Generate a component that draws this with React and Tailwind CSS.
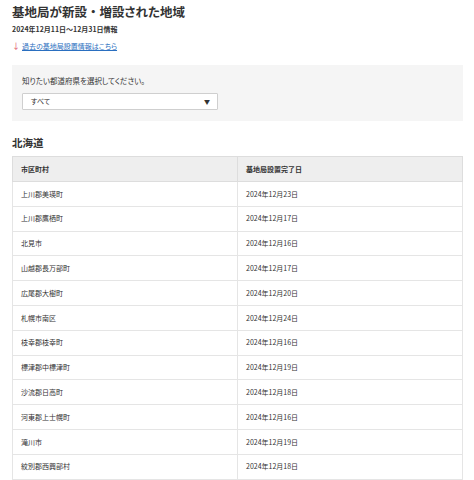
import React from "react";

const rows = [
  ["上川郡美瑛町", "2024年12月23日"],
  ["上川郡鷹栖町", "2024年12月17日"],
  ["北見市", "2024年12月16日"],
  ["山越郡長万部町", "2024年12月17日"],
  ["広尾郡大樹町", "2024年12月20日"],
  ["札幌市南区", "2024年12月24日"],
  ["枝幸郡枝幸町", "2024年12月16日"],
  ["標津郡中標津町", "2024年12月19日"],
  ["沙流郡日高町", "2024年12月18日"],
  ["河東郡上士幌町", "2024年12月16日"],
  ["滝川市", "2024年12月19日"],
  ["紋別郡西興部村", "2024年12月18日"],
];

export default function App() {
  return (
    <div
      className="bg-white text-[#333] px-[12px] pt-[4px] [font-feature-settings:'palt']"
      style={{ fontFamily: '"Noto Sans CJK JP", "Noto Sans", sans-serif' }}
    >
      <h1 className="text-[12.5px] font-bold leading-[16px] text-[#333]">
        基地局が新設<span className="[font-feature-settings:normal]">・</span>増設された地域
      </h1>
      <p className="text-[7px] font-bold leading-[10px] mt-[4px]">2024年12月11日～12月31日情報</p>
      <div className="flex items-center gap-[2px] mt-[7px] text-[7px] leading-[10px]">
        <span className="text-[#e0506a] text-[8px]">↓</span>
        <a className="text-[#2a6fc0] underline">過去の基地局設置情報はこちら</a>
      </div>
      <div className="bg-[#f5f5f5] mt-[14px] px-[10px] pt-[11px] pb-[11px] w-[451px]">
        <p className="text-[7.5px] leading-[10px]">知りたい都道府県を選択してください。</p>
        <div className="mt-[7px] w-[196px] h-[17px] bg-white border border-[#cfcfcf] rounded-[1px] flex items-center justify-between pl-[8px] pr-[7px] text-[7px]">
          <span>すべて</span>
          <span className="text-[6px] text-[#333]">▼</span>
        </div>
      </div>
      <h2 className="text-[10.5px] font-bold leading-[14px] mt-[15px]">北海道</h2>
      <table className="mt-[6px] w-[451px] border-collapse text-[7px]">
        <thead>
          <tr className="bg-[#eeeeee]">
            <th className="border border-[#dddddd] text-left font-bold h-[25px] pl-[8px] w-[225px]">市区町村</th>
            <th className="border border-[#dddddd] text-left font-bold h-[25px] pl-[8px]">基地局設置完了日</th>
          </tr>
        </thead>
        <tbody>
          {rows.map(([a, b]) => (
            <tr key={a}>
              <td className="border border-[#e5e5e5] h-[24.8px] pl-[8px]">{a}</td>
              <td className="border border-[#e5e5e5] h-[24.8px] pl-[8px]">{b}</td>
            </tr>
          ))}
        </tbody>
      </table>
    </div>
  );
}
